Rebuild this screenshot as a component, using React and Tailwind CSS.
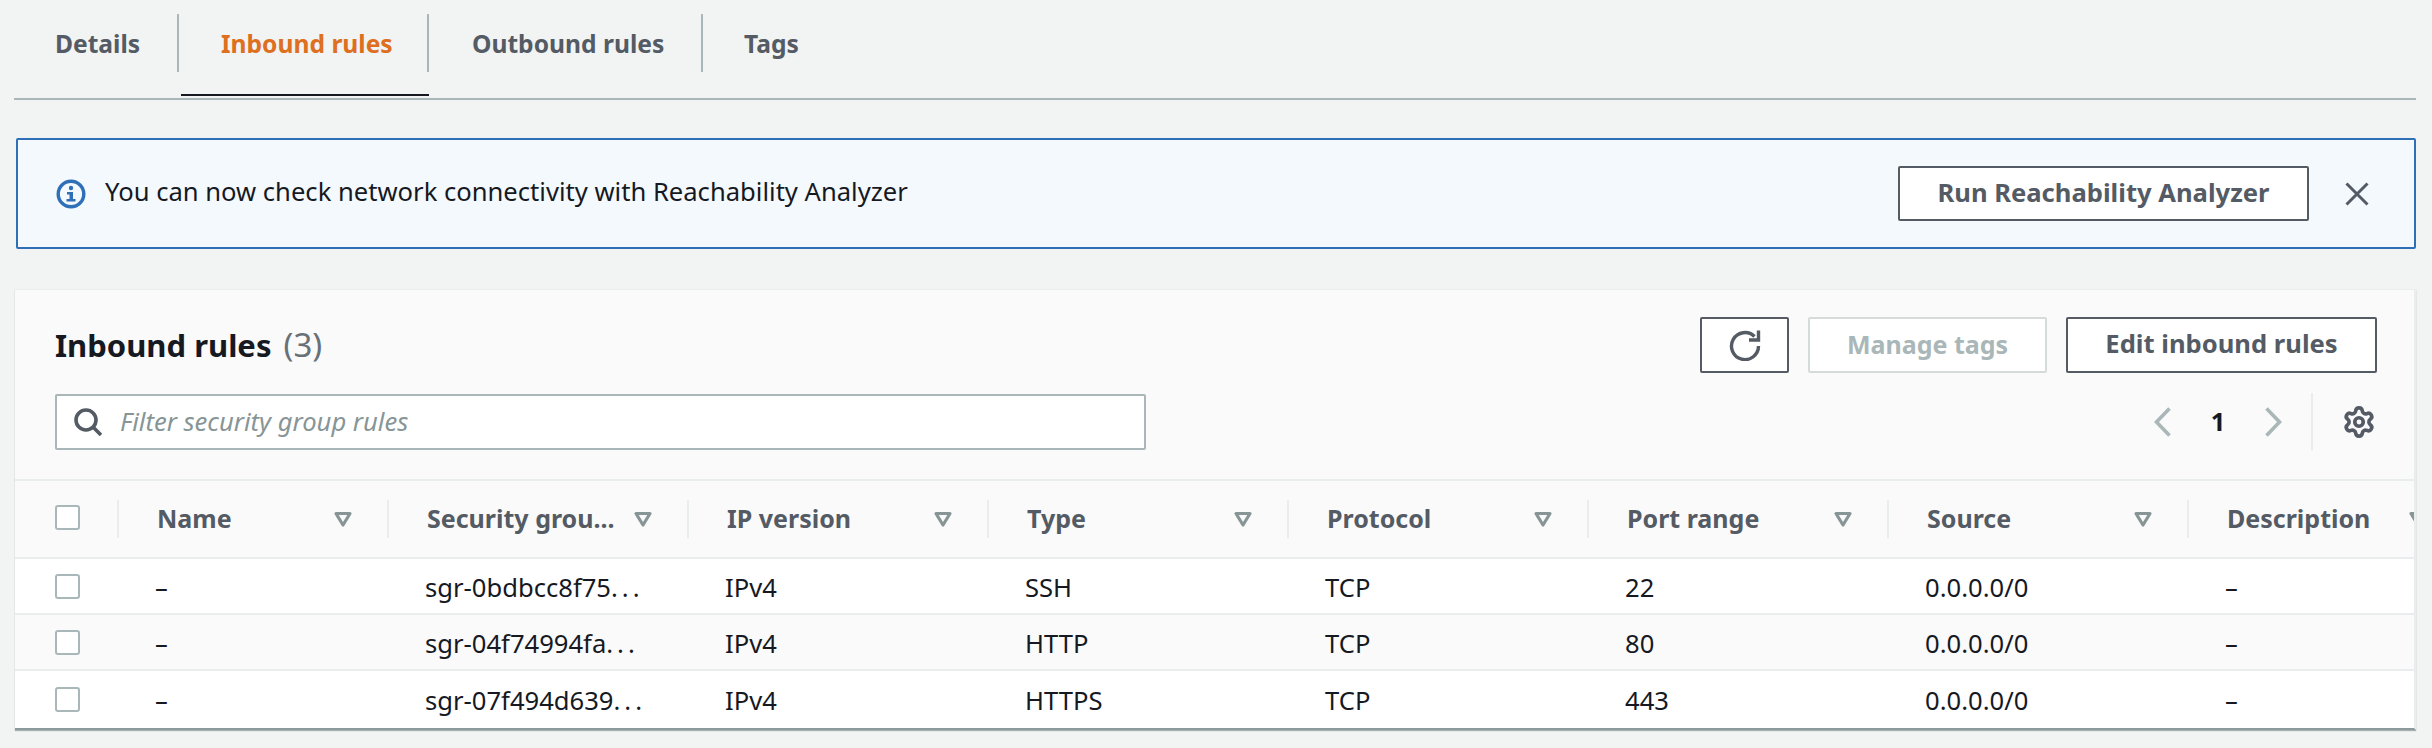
import { Settings } from 'lucide-react';

const tabs = [
  { name: 'Details', width: 'w-[165px]', color: 'text-[#545b64]', pad: 'pl-[41px]', divider: true },
  { name: 'Inbound rules', width: 'w-[250px]', color: 'text-[#dd6f1f]', pad: 'pl-[42px]', divider: true, active: true },
  { name: 'Outbound rules', width: 'w-[274px]', color: 'text-[#545b64]', pad: 'pl-[43px]', divider: true },
  { name: 'Tags', width: 'w-[120px]', color: 'text-[#545b64]', pad: 'pl-[41px]', divider: false },
];

const columns = ['Name', 'Security grou...', 'IP version', 'Type', 'Protocol', 'Port range', 'Source', 'Description'];

const rows = [
  ['–', 'sgr-0bdbcc8f75...', 'IPv4', 'SSH', 'TCP', '22', '0.0.0.0/0', '–'],
  ['–', 'sgr-04f74994fa...', 'IPv4', 'HTTP', 'TCP', '80', '0.0.0.0/0', '–'],
  ['–', 'sgr-07f494d639...', 'IPv4', 'HTTPS', 'TCP', '443', '0.0.0.0/0', '–'],
];

const gridCols = 'grid grid-cols-[104px_270px_300px_300px_300px_300px_300px_300px_273px]';

const SortIcon = () => (
  <svg width="20" height="18" viewBox="0 0 20 18" className="shrink-0">
    <path d="M3 3.5 H17 L10 15 Z" fill="none" stroke="#879596" strokeWidth="3.2" strokeLinejoin="round" />
  </svg>
);

const Checkbox = () => <div className="w-[25px] h-[25px] rounded-[3px] border-2 border-[#aab7b8] bg-white" />;

const InfoIcon = () => (
  <svg width="30" height="30" viewBox="0 0 30 30" className="shrink-0">
    <circle cx="15" cy="15" r="12.8" fill="none" stroke="#2e6fb7" strokeWidth="3.4" />
    <circle cx="15" cy="9" r="2.2" fill="#2e6fb7" />
    <path d="M11 13 H17 V20 H19.5 V22.5 H10.5 V20 H13.5 V15.5 H11 Z" fill="#2e6fb7" />
  </svg>
);

const CloseIcon = () => (
  <svg width="24" height="24" viewBox="0 0 24 24" className="shrink-0">
    <path d="M1.5 1.5 L22.5 22.5 M22.5 1.5 L1.5 22.5" fill="none" stroke="#545b64" strokeWidth="3" />
  </svg>
);

const RefreshIcon = () => (
  <svg width="32" height="32" viewBox="0 0 32 32">
    <path d="M29.5 17 A13.5 13.5 0 1 1 25.5 7.5" fill="none" stroke="#545b64" strokeWidth="3.4" />
    <path d="M29.5 1.5 V11 H20" fill="none" stroke="#545b64" strokeWidth="3.4" />
  </svg>
);

const SearchIcon = () => (
  <svg width="28" height="28" viewBox="0 0 28 28" className="shrink-0">
    <circle cx="12" cy="12" r="10" fill="none" stroke="#545b64" strokeWidth="3.6" />
    <path d="M19 19 L27 27" fill="none" stroke="#545b64" strokeWidth="3.6" />
  </svg>
);

const Chevron = ({ d }) => (
  <svg width="17" height="30" viewBox="0 0 17 30" className="shrink-0">
    <path d={d} fill="none" stroke="#aab7b8" strokeWidth="3.6" />
  </svg>
);

// the cut-off ids have widely spaced dots in the original
const CutText = ({ text }) => {
  if (!text.endsWith('...')) return text;
  return (
    <>
      {text.slice(0, -3)}
      <span className="tracking-[4px]">...</span>
    </>
  );
};

const App = () => {
  return (
    <div className="h-[748px] overflow-hidden bg-[#f2f3f3] font-['Noto_Sans',sans-serif] text-[25.6px] text-[#16191f]">
      {/* tabs */}
      <div className="ml-[14px] mr-[16px] h-[100px] border-b-2 border-[#aab7b8] pt-[14px] flex items-start">
        {tabs.map((tab) => (
          <div
            key={tab.name}
            className={`relative h-[58px] ${tab.width} ${tab.pad} pt-[2px] flex items-center font-bold text-[24.6px] ${tab.color} ${tab.divider ? 'border-r-2 border-[#aab7b8]' : ''}`}
          >
            {tab.name}
            {tab.active && <div className="absolute left-[2px] right-[-2px] top-[80px] h-[2px] bg-[#16191f]" />}
          </div>
        ))}
      </div>

      {/* alert */}
      <div className="mt-[38px] ml-[16px] mr-[16px] h-[111px] rounded-[2px] border-2 border-[#2e6fb7] bg-[#f4f9fd] flex items-center pl-[38px] pr-[45px]">
        <InfoIcon />
        <span className="ml-[19px] mb-[2px] flex-1">You can now check network connectivity with Reachability Analyzer</span>
        <button className="w-[411px] h-[55px] rounded-[2px] border-2 border-[#545b64] bg-white font-bold text-[25.6px] text-[#545b64]">
          Run Reachability Analyzer
        </button>
        <div className="ml-[36px]">
          <CloseIcon />
        </div>
      </div>

      {/* card */}
      <div className="mt-[40px] ml-[15px] mr-[16px] h-[441px] bg-[#fafafa] border-t border-[#eaeded] border-r-2 border-r-[#eaeded] border-b-2 border-b-[#8d9a9b] shadow-[0_1px_1px_rgba(0,28,36,0.3)] overflow-hidden flex flex-col">
        <div className="h-[189px] shrink-0 pl-[40px] pr-[37px] pt-[26px] flex flex-col">
          <div className="flex items-center justify-between h-[57px]">
            <h2 className="text-[31px] font-bold">
              Inbound rules <span className="ml-[4px] font-normal text-[33px] text-[#687078]">(3)</span>
            </h2>
            <div className="flex gap-[19px]">
              <button className="w-[89px] h-[56px] rounded-[2px] border-2 border-[#545b64] bg-white flex items-center justify-center">
                <RefreshIcon />
              </button>
              <button className="w-[239px] h-[56px] rounded-[2px] border-2 border-[#d5dbdb] bg-white font-bold text-[25px] text-[#aab7b8]">
                Manage tags
              </button>
              <button className="w-[311px] h-[56px] rounded-[2px] border-2 border-[#545b64] bg-white font-bold text-[25.6px] text-[#545b64]">
                Edit inbound rules
              </button>
            </div>
          </div>
          <div className="mt-[20px] flex items-center justify-between">
            <div className="w-[1091px] h-[56px] rounded-[2px] border-2 border-[#aab7b8] bg-white flex items-center pl-[17px]">
              <SearchIcon />
              <span className="ml-[18px] italic text-[#879596]">Filter security group rules</span>
            </div>
            <div className="flex items-center h-[58px]">
              <Chevron d="M15.5 1.5 L2.5 15 L15.5 28.5" />
              <span className="w-[94px] text-center font-bold">1</span>
              <Chevron d="M1.5 1.5 L14.5 15 L1.5 28.5" />
              <div className="ml-[29px] w-[2px] h-[58px] bg-[#eaeded]" />
              <Settings className="ml-[29px] mr-[1px] text-[#545b64]" size={34} strokeWidth={2.6} />
            </div>
          </div>
        </div>

        {/* table header */}
        <div className={`${gridCols} w-[2447px] h-[80px] shrink-0 items-center border-y-2 border-[#eaeded]`}>
          <div className="pl-[40px] h-[38px] border-r-2 border-[#eaeded] flex items-center">
            <div className="mb-[4px]">
              <Checkbox />
            </div>
          </div>
          {columns.map((col, idx) => (
            <div key={col} className={`h-[38px] flex items-center justify-between pl-[38px] pr-[34px] font-bold text-[25px] text-[#545b64] ${idx < columns.length - 1 ? 'border-r-2 border-[#eaeded]' : ''}`}>
              <span className="whitespace-nowrap">{col}</span>
              <SortIcon />
            </div>
          ))}
        </div>

        {/* rows */}
        <div className="flex-1 bg-white">
          {rows.map((row, i) => (
            <div key={row[1]} className={`${gridCols} w-[2447px] h-[56px] items-center border-b-2 border-[#eaeded] last:border-b-0 ${i % 2 === 1 ? 'bg-[#fafafa]' : 'bg-white'}`}>
              <div className="pl-[40px]">
                <Checkbox />
              </div>
              {row.map((cell, idx) => (
                <div key={idx} className="pl-[36px] pt-[4px] whitespace-nowrap">
                  <CutText text={cell} />
                </div>
              ))}
            </div>
          ))}
        </div>
      </div>
    </div>
  );
};

export default App;
